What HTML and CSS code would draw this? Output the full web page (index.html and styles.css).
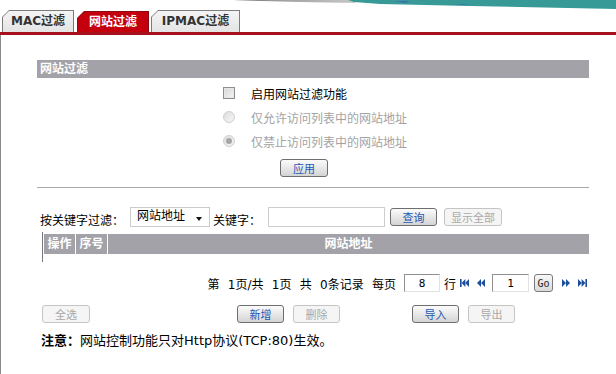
FILE: index.html
```html
<!DOCTYPE html>
<html>
<head>
  <meta charset="utf-8">
  <meta name="viewport" content="width=device-width, initial-scale=1">
  <title>网站过滤</title>
  <link rel="stylesheet" href="styles.css">
</head>
<body>
<div class="banner">
  <svg width="616" height="10" viewBox="0 0 616 10">
    <defs>
      <linearGradient id="fade" x1="0" x2="1" y1="0" y2="0">
        <stop offset="0" stop-color="#444"/>
        <stop offset="0.3" stop-color="#9a9a9a"/>
        <stop offset="1" stop-color="#c8c8c8"/>
      </linearGradient>
    </defs>
    <polygon points="233,0 352,0 356,3 300,2 262,1" fill="url(#fade)"/>
    <polygon points="348,0 616,0 616,9 470,6 380,4 354,2" fill="#389a97"/>
    <polygon points="395,1 410,1 405,3" fill="#3b6fb5"/>
    <polygon points="455,4 470,4 462,5" fill="#3b6fb5"/>
  </svg>
</div>

<nav class="tabs">
  <a class="tab"><span>MAC过滤</span></a>
  <a class="tab active"><span>网站过滤</span></a>
  <a class="tab wide"><span>IPMAC过滤</span></a>
</nav>

<main class="panel">
  <div class="sec-title">网站过滤</div>

  <div class="opts">
    <label class="opt"><span class="check"></span>启用网站过滤功能</label>
    <label class="opt off"><span class="radio"></span>仅允许访问列表中的网站地址</label>
    <label class="opt off"><span class="radio on"></span>仅禁止访问列表中的网站地址</label>
  </div>
  <button class="btn apply">应用</button>

  <hr class="rule">

  <div class="search">
    <span class="search-label">按关键字过滤：</span>
    <div class="select">网站地址<span class="arrow"></span></div>
    <span class="kw-label">关键字：</span>
    <input class="kw" type="text">
    <button class="btn query">查询</button>
    <button class="btn show-all" disabled>显示全部</button>
  </div>

  <div class="list">
    <div class="list-head">
      <span class="c-op">操作</span>
      <span class="c-no">序号</span>
      <span class="c-url">网站地址</span>
    </div>
  </div>

  <div class="pager">
    <span class="pager-text">第 1页/共 1页 共 0条记录 每页</span>
    <input class="pg-input rows" type="text" value="8">
    <span class="row-label">行</span>
    <svg class="ico first" width="9" height="8" viewBox="0 0 9 8"><rect x="0" y="0" width="1.6" height="8"/><polygon points="5.4,0 1.6,4 5.4,8"/><polygon points="9,0 5.2,4 9,8"/></svg>
    <svg class="ico prev" width="8" height="8" viewBox="0 0 8 8"><polygon points="4,0 0,4 4,8"/><polygon points="8,0 4,4 8,8"/></svg>
    <input class="pg-input page" type="text" value="1">
    <button class="go">Go</button>
    <svg class="ico next" width="8" height="8" viewBox="0 0 8 8"><polygon points="0,0 4,4 0,8"/><polygon points="4,0 8,4 4,8"/></svg>
    <svg class="ico last" width="9" height="8" viewBox="0 0 9 8"><polygon points="0,0 3.8,4 0,8"/><polygon points="3.6,0 7.4,4 3.6,8"/><rect x="7.4" y="0" width="1.6" height="8"/></svg>
  </div>

  <div class="actions">
    <button class="btn sel-all" disabled>全选</button>
    <button class="btn add">新增</button>
    <button class="btn del" disabled>删除</button>
    <button class="btn imp">导入</button>
    <button class="btn exp" disabled>导出</button>
  </div>

  <p class="note"><b>注意：</b>网站控制功能只对Http协议(TCP:80)生效。</p>
</main>
</body>
</html>
```

FILE: styles.css
```css
html {
  font-size: 12px;
}

body {
  margin: 0;
  font-family: "DejaVu Sans", "Noto Sans CJK SC", sans-serif;
  font-size: 12px;
  color: #000;
  background: #fff;
}

.banner svg {
  display: block;
}

/* tabs */

.tabs {
  display: flex;
  align-items: flex-end;
  gap: 3px;
  height: 22px;
  padding-left: 2px;
  border-bottom: 3px solid #a5121d;
}

.tab {
  width: 72px;
  height: 22px;
  box-sizing: border-box;
  padding: 1px 1px 0;
  background: #7c7c7c;
  clip-path: polygon(7px 0, 100% 0, 100% 100%, 0 100%, 0 7px);
}

.tab.wide {
  width: 89px;
  margin-left: -1px;
}

.tab span {
  display: block;
  height: 100%;
  background: linear-gradient(#f4f4f4, #e4e4e4);
  clip-path: polygon(6px 0, 100% 0, 100% 100%, 0 100%, 0 6px);
  text-align: center;
  line-height: 21px;
  font-weight: bold;
  color: #333;
}

.tab.active {
  height: 21px;
  background: #8c0a12;
}

.tab.active span {
  background: #c4000f;
  color: #fff;
  line-height: 20px;
}

/* panel */

.panel {
  box-sizing: border-box;
  min-height: calc(100vh - 35px);
  padding: 25px 27px 0 36px;
  border-left: 1px solid #8a8a8a;
}

.sec-title {
  height: 18px;
  line-height: 18px;
  padding-left: 3px;
  background: #a3a2a9;
  color: #fff;
  font-weight: bold;
}

.opts {
  margin-top: 3px;
  padding-left: 186px;
}

.opt {
  display: flex;
  align-items: center;
  height: 24px;
}

.opt.off {
  color: #a3a3a3;
}

.check {
  width: 10px;
  height: 10px;
  margin-right: 16px;
  border: 1px solid #8e8e8e;
  background: linear-gradient(135deg, #d6d6d6, #f6f6f6);
  box-shadow: inset 0 0 0 1px #e6e6e6;
}

.radio {
  position: relative;
  width: 10px;
  height: 10px;
  margin-right: 16px;
  border: 1px solid #cfcfcf;
  border-radius: 50%;
  background: linear-gradient(135deg, #dedede, #f6f6f6);
}

.radio.on::after {
  content: "";
  position: absolute;
  top: 2px;
  left: 2px;
  width: 6px;
  height: 6px;
  border-radius: 50%;
  background: #a6a6a6;
}

/* buttons */

.btn {
  height: 18px;
  width: 47px;
  padding: 0;
  border: 1px solid #6e6e6e;
  border-radius: 3px;
  background: linear-gradient(#fbfbfb, #d4d4d4);
  color: #1c58b5;
  font-family: "Noto Sans CJK SC", sans-serif;
  font-size: 11px;
  line-height: 16px;
}

.btn:disabled {
  border-color: #c4c4c4;
  background: #f5f5f5;
  color: #a8a8a8;
}

.apply {
  display: block;
  width: 48px;
  margin: 6px 0 0 243px;
}

.rule {
  height: 0;
  margin: 10px 0 0;
  border: 0;
  border-top: 1px solid #a9a9a9;
}

/* search */

.search {
  display: flex;
  align-items: center;
  height: 20px;
  margin-top: 19px;
  padding-left: 3px;
}

.search-label {
  margin-right: 6px;
  padding-top: 4px;
}

.select {
  position: relative;
  box-sizing: border-box;
  width: 80px;
  height: 20px;
  padding: 1px 0 0 6px;
  border: 1px solid #cbcbcb;
  line-height: 14px;
}

.arrow {
  position: absolute;
  top: 9px;
  right: 7px;
  border-left: 3px solid transparent;
  border-right: 3px solid transparent;
  border-top: 4px solid #111;
}

.kw-label {
  margin-left: 3px;
  padding-top: 4px;
}

.kw {
  box-sizing: border-box;
  width: 117px;
  height: 20px;
  margin-left: 7px;
  border: 1px solid #cdcdcd;
  padding: 0;
}

.query {
  margin-left: 5px;
}

.show-all {
  width: 58px;
  margin-left: 7px;
}

/* list */

.list {
  margin-top: 5px;
  padding: 2px 0 8px 1px;
  margin-left: 5px;
  border-left: 1px solid #777;
}

.list-head {
  display: flex;
  height: 20px;
  line-height: 20px;
  background: #a3a2a9;
  color: #fff;
  font-weight: bold;
}

.c-op,
.c-no {
  width: 31px;
  text-align: center;
  border-right: 1px solid #fff;
}

.c-url {
  flex: 1;
  text-align: center;
}

/* pager */

.pager {
  display: flex;
  justify-content: flex-end;
  align-items: center;
  height: 18px;
  margin-top: 12px;
  padding-right: 2px;
}

.pager-text {
  word-spacing: 4.5px;
}

.pg-input {
  box-sizing: border-box;
  height: 18px;
  padding: 0;
  border: 1px solid #e2e2e2;
  border-top-color: #8f8f8f;
  border-left-color: #8f8f8f;
  text-align: center;
  font-family: "DejaVu Sans Mono", monospace;
  font-size: 11px;
}

.rows {
  width: 36px;
  margin-left: 8px;
}

.row-label {
  margin-left: 4px;
}

.ico {
  fill: #1d4f9c;
}

.first {
  margin-left: 4px;
}

.prev {
  margin-left: 8px;
}

.page {
  width: 37px;
  margin-left: 7px;
}

.go {
  box-sizing: border-box;
  width: 19px;
  height: 18px;
  margin-left: 5px;
  padding: 0;
  border: 1px solid #7a7a7a;
  border-radius: 3px;
  background: linear-gradient(#f8f8f8, #dadada);
  font-family: "DejaVu Sans Mono", monospace;
  font-size: 10px;
  color: #222;
}

.next {
  margin-left: 9px;
}

.last {
  margin-left: 8px;
}

/* actions */

.actions {
  display: flex;
  align-items: center;
  margin-top: 13px;
}

.sel-all {
  width: 48px;
  margin-left: 5px;
}

.add {
  margin-left: 147px;
}

.del {
  margin-left: 9px;
}

.imp {
  margin-left: 72px;
}

.exp {
  margin-left: 9px;
}

.note {
  margin: 11px 0 0;
  padding-left: 4px;
  font-size: 13px;
  line-height: 14px;
}
```
